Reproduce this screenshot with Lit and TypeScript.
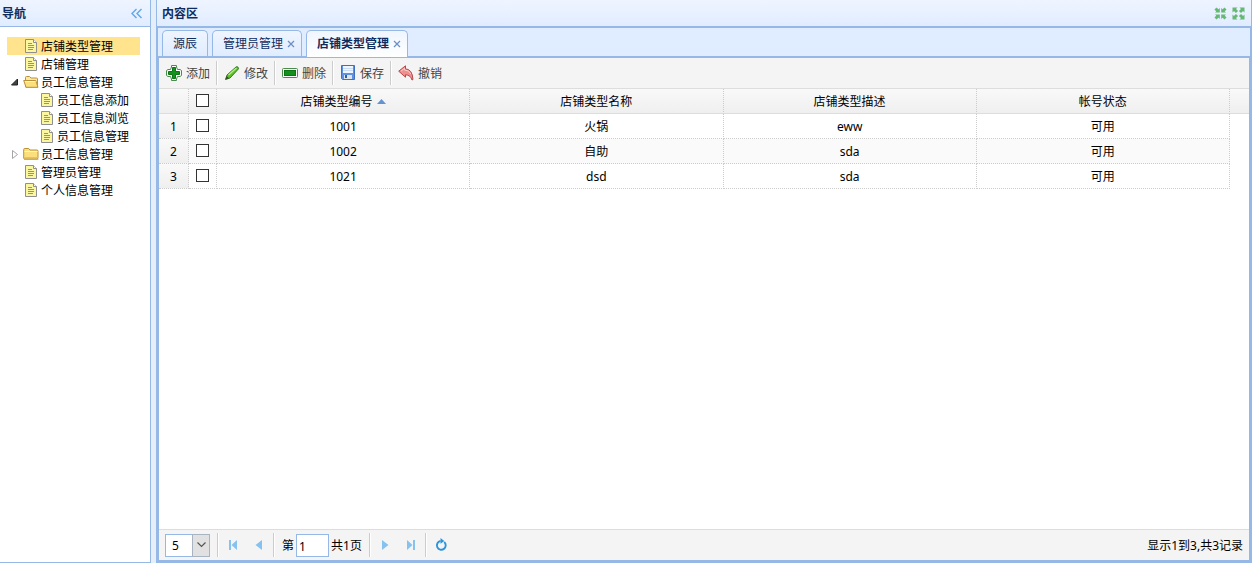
import { LitElement, html, css, svg, nothing } from "lit";
import { customElement, state } from "lit/decorators.js";
import { classMap } from "lit/directives/class-map.js";

interface TreeNode {
  text: string;
  children?: TreeNode[];
  open?: boolean;
}

interface ShopType {
  id: string;
  name: string;
  description: string;
  status: string;
}

const TREE: TreeNode[] = [
  { text: "店铺类型管理" },
  { text: "店铺管理" },
  {
    text: "员工信息管理",
    open: true,
    children: [{ text: "员工信息添加" }, { text: "员工信息浏览" }, { text: "员工信息管理" }],
  },
  { text: "员工信息管理", open: false, children: [] },
  { text: "管理员管理" },
  { text: "个人信息管理" },
];

const TABS = [
  { text: "源辰", closable: false },
  { text: "管理员管理", closable: true },
  { text: "店铺类型管理", closable: true },
];

const ROWS: ShopType[] = [
  { id: "1001", name: "火锅", description: "eww", status: "可用" },
  { id: "1002", name: "自助", description: "sda", status: "可用" },
  { id: "1021", name: "dsd", description: "sda", status: "可用" },
];

const icon = (body: unknown, w = 16, h = 16) =>
  html`<svg class="icon" width=${w} height=${h} viewBox="0 0 ${w} ${h}" aria-hidden="true">${body}</svg>`;

const fileIcon = icon(svg`
  <path d="M2.500 1.500h8l3 3v10h-11z" fill="#fbf7a0" stroke="#8f8f8f"/>
  <path d="M10.500 1.500v3h3" fill="#fff" stroke="#8f8f8f"/>
  <path d="M5 5.500h4M5 7.500h6M5 9.500h6M5 11.500h5" stroke="#9a9562"/>`);

const folderClosed = icon(svg`
  <path d="M1 13.500h14.500" stroke="#c9c9c9"/>
  <path d="M.7 12V3.500q0-1 1-1h4l1.300 1.500h7q1 0 1 1v7q0 1-1 1H1.700q-1 0-1-1z" fill="#fbdf7c" stroke="#bb9137"/>
  <path d="M1.500 5.500h13" stroke="#fff6c8"/>
  <path d="M1.500 11.500h13" stroke="#efc14c"/>`);

const folderOpen = icon(svg`
  <path d="M2.500 13V3.500q0-1 1-1h3L8 4h5.500q1 0 1 1v8z" fill="#fbe9a0" stroke="#bb9137"/>
  <path d="M.7 6.500h12l2.300 6.800H3z" fill="#fbdf7c" stroke="#bb9137" stroke-linejoin="round"/>
  <path d="M2 7.500h10.500" stroke="#fff6c8"/>`);

const addIcon = icon(svg`
  <path d="M5.500.5h5v1.500l1 2.500h2.500l1.500 1v5l-1.500 1h-2.500l-1 2.500v1.500h-5v-1.500l-1-2.500H2l-1.500-1v-5l1.500-1h2.500l1-2.500z" fill="#fff" stroke="#4d8a4d"/>
  <path d="M6.500 2.500h3v4h4v3h-4v4h-3v-4h-4v-3h4z" fill="#14911c" stroke="#0b7512"/>`);

const editIcon = icon(svg`
  <path d="M1.500 14.500l1.500-4.500 9-8q1-.8 2 .2t.2 2l-8.200 8.800z" fill="#5cbf2c" stroke="#2f7d1c" stroke-linejoin="round"/>
  <path d="M4.500 10l8-7" stroke="#b9ee82" stroke-width="1.300"/>
  <path d="M1.500 14.500l1.200-3.500 2.300 2.300z" fill="#3b4b28"/>`);

const removeIcon = icon(svg`
  <rect x=".5" y="3.500" width="15" height="9" rx="1" fill="#fff" stroke="#4d8a4d"/>
  <rect x="2.500" y="5.500" width="11" height="5" fill="#14911c" stroke="#0b7512"/>`);

const saveIcon = icon(svg`
  <path d="M1.500.5h13v14h-12l-1-1z" fill="#5f91e0" stroke="#3f70c0"/>
  <rect x="3" y="1" width="10" height="7" fill="#eef5ff"/>
  <path d="M3 3.500h10M3 5.500h10" stroke="#c9daf3"/>
  <rect x="4" y="10" width="8" height="4" fill="#dfe3ea"/>
  <rect x="5" y="10" width="2" height="3" fill="#2f5ba8"/>`);

const undoIcon = icon(svg`
  <path d="M.7 6.200L7.500.8v3q6.800.4 7.500 10.700l-1 .5q-1.500-5-6.500-5.200v2.400z" fill="#f08f8f" stroke="#b64a4a" stroke-linejoin="round"/>
  <path d="M3 6.200L6.500 3.300v1.700q4.500 0 6.500 4" fill="none" stroke="#fbd0cc"/>`);

const TOOLS = [
  { text: "添加", icon: addIcon },
  { text: "修改", icon: editIcon },
  { text: "删除", icon: removeIcon },
  { text: "保存", icon: saveIcon },
  { text: "撤销", icon: undoIcon },
];

const collapseAll = icon(
  svg`<path d="M1.500 1.500l2.500 2.500M11.500 1.500L9 4M1.500 11.500L4 9M11.500 11.500L9 9" stroke="#66b875" stroke-width="3"/>
  <path d="M1 5.500h4.800V1zM12 5.500H7.200V1zM1 7.500h4.800V12zM12 7.500H7.200V12z" fill="#66b875"/>`,
  13,
  13,
);

const expandAll = icon(
  svg`<path d="M2 2l3 3M11 2L8 5M2 11l3-3M11 11L8 8" stroke="#66b875" stroke-width="3"/>
  <path d="M.5 5.500v-5h5zM12.500 5.500v-5h-5zM.5 7.500v5h5zM12.500 7.500v5h-5z" fill="#66b875"/>`,
  13,
  13,
);

@customElement("nav-tree")
class NavTree extends LitElement {
  @state() private nodes: TreeNode[] = TREE;
  @state() private selected: TreeNode = TREE[0];

  static styles = css`
    :host {
      display: block;
      padding: 10px 10px 10px 7px;
    }
    ul {
      list-style: none;
      margin: 0;
      padding: 0;
    }
    .node {
      display: flex;
      align-items: center;
      height: 18px;
      color: #000;
      text-decoration: none;
      white-space: nowrap;
    }
    .node.selected {
      background: #ffe48d;
    }
    .hit {
      flex: none;
      display: flex;
      justify-content: center;
      width: 16px;
    }
    .icon {
      flex: none;
      display: block;
    }
    .label {
      padding: 2px 0 0 2px;
      line-height: 16px;
    }
  `;

  private pick(event: Event, node: TreeNode) {
    event.preventDefault();
    this.selected = node;
    if (node.children) {
      node.open = !node.open;
      this.nodes = [...this.nodes];
    }
  }

  private renderHit(node: TreeNode) {
    if (!node.children) return nothing;
    return node.open
      ? icon(svg`<path d="M10.500 5v6h-6z" fill="#444" stroke="#222"/>`)
      : icon(svg`<path d="M5.500 4.500l5 4-5 4z" fill="#fff" stroke="#a5a5a5"/>`);
  }

  private renderNodes(nodes: TreeNode[], depth: number): unknown {
    return html`<ul>
      ${nodes.map(
        (node) => html`<li>
          <a
            href="#"
            class=${classMap({ node: true, selected: node === this.selected })}
            @click=${(e: Event) => this.pick(e, node)}
          >
            ${Array.from({ length: depth }, () => html`<span class="hit"></span>`)}
            <span class="hit">${this.renderHit(node)}</span>
            ${node.children ? (node.open ? folderOpen : folderClosed) : fileIcon}
            <span class="label">${node.text}</span>
          </a>
          ${node.children && node.open ? this.renderNodes(node.children, depth + 1) : nothing}
        </li>`,
      )}
    </ul>`;
  }

  render() {
    return this.renderNodes(this.nodes, 0);
  }
}

@customElement("shop-grid")
class ShopGrid extends LitElement {
  static styles = css`
    :host {
      display: block;
      flex: 1;
      min-height: 0;
      overflow: auto;
      background: #fff;
    }
    table {
      width: 100%;
      table-layout: fixed;
      border-collapse: separate;
      border-spacing: 0;
      color: #000;
    }
    .col-number {
      width: 30px;
    }
    .col-check {
      width: 28px;
    }
    .col-gutter {
      width: 19px;
    }
    th,
    td {
      box-sizing: border-box;
      height: 25px;
      padding: 2px 0 0;
      text-align: center;
      font-weight: normal;
      line-height: 16px;
      border-right: 1px dotted #ccc;
      border-bottom: 1px dotted #ccc;
    }
    th {
      border-bottom: 1px solid #ddd;
      background: linear-gradient(#f9f9f9, #efefef);
    }
    th:last-child {
      border-right: 0;
    }
    .check {
      padding: 0 0 2px;
    }
    td.gutter {
      border: 0;
      background: #fff;
    }
    td.number {
      background: linear-gradient(#f9f9f9, #efefef);
    }
    tbody tr:nth-child(even) {
      background: #fafafa;
    }
    input {
      appearance: none;
      display: block;
      box-sizing: border-box;
      width: 13px;
      height: 13px;
      margin: 0 auto;
      border: 1px solid #333;
      background: #fff;
    }
    input:checked {
      background: #333;
      box-shadow: inset 0 0 0 2px #fff;
    }
    .sort {
      display: inline-flex;
      align-items: center;
      gap: 4px;
    }
    .sort svg {
      margin-bottom: 2px;
    }
  `;

  render() {
    return html`<table>
      <colgroup>
        <col class="col-number" />
        <col class="col-check" />
        <col span="4" />
        <col class="col-gutter" />
      </colgroup>
      <thead>
        <tr>
          <th></th>
          <th class="check"><input type="checkbox" aria-label="全选" /></th>
          <th aria-sort="ascending">
            <span class="sort"
              >店铺类型编号<svg width="9" height="5" viewBox="0 0 9 5" aria-hidden="true">
                <path d="M4.500 0L9 5H0z" fill="#6393d2" /></svg
            ></span>
          </th>
          <th>店铺类型名称</th>
          <th>店铺类型描述</th>
          <th>帐号状态</th>
          <th></th>
        </tr>
      </thead>
      <tbody>
        ${ROWS.map(
          (row, i) => html`<tr>
            <td class="number">${i + 1}</td>
            <td class="check"><input type="checkbox" aria-label=${row.id} /></td>
            <td>${row.id}</td>
            <td>${row.name}</td>
            <td>${row.description}</td>
            <td>${row.status}</td>
            <td class="gutter"></td>
          </tr>`,
        )}
      </tbody>
    </table>`;
  }
}

@customElement("grid-pager")
class GridPager extends LitElement {
  static styles = css`
    :host {
      flex: none;
      display: flex;
      align-items: center;
      height: 30px;
      padding: 0 6px;
      border-top: 1px solid #ddd;
      background: #f4f4f4;
      color: #000;
    }
    .size {
      display: grid;
      margin-right: 6px;
    }
    .size > * {
      grid-area: 1 / 1;
    }
    select,
    input {
      appearance: none;
      box-sizing: border-box;
      height: 23px;
      margin: 0;
      border: 1px solid #95b8e7;
      border-radius: 0;
      background: #fff;
      color: #000;
      font: inherit;
    }
    select {
      width: 45px;
      padding: 2px 6px 0;
    }
    .drop {
      justify-self: end;
      display: grid;
      place-items: center;
      box-sizing: border-box;
      width: 18px;
      height: 23px;
      border: 1px solid #a9b4c2;
      background: #e1e1e1;
      pointer-events: none;
    }
    input {
      width: 33px;
      padding: 2px 2px 0;
    }
    .sep {
      flex: none;
      width: 1px;
      height: 24px;
      margin: 0 1px;
      border-right: 1px solid #fff;
      background: #ccc;
    }
    button {
      display: grid;
      place-items: center;
      width: 26px;
      height: 26px;
      padding: 0;
      border: 0;
      background: none;
    }
    .icon {
      display: block;
    }
    .page {
      display: flex;
      align-items: center;
      gap: 2px;
      padding: 0 6px;
    }
    .page label,
    .page span,
    .info {
      padding-top: 2px;
    }
    .info {
      margin-left: auto;
    }
  `;

  render() {
    const blue = "#85c2f0";
    return html`
      <div class="size">
        <select aria-label="每页记录数">
          <option>5</option>
          <option>10</option>
          <option>20</option>
        </select>
        <span class="drop"
          ><svg width="9" height="6" viewBox="0 0 9 6">
            <path d="M.5.500l4 4 4-4" fill="none" stroke="#555" stroke-width="1.200" /></svg
        ></span>
      </div>
      <span class="sep"></span>
      <button aria-label="首页">
        ${icon(svg`<path d="M4 3h2v10H4zM12 3v10L6.500 8z" fill=${blue}/>`)}
      </button>
      <button aria-label="上一页">${icon(svg`<path d="M11 3v10L4.500 8z" fill=${blue}/>`)}</button>
      <span class="sep"></span>
      <div class="page">
        <label for="page">第</label>
        <input id="page" type="text" value="1" />
        <span>共1页</span>
      </div>
      <span class="sep"></span>
      <button aria-label="下一页">${icon(svg`<path d="M5 3v10l6.500-5z" fill=${blue}/>`)}</button>
      <button aria-label="末页">
        ${icon(svg`<path d="M4 3v10l5.500-5zM10 3h2v10h-2z" fill=${blue}/>`)}
      </button>
      <span class="sep"></span>
      <button aria-label="刷新">
        ${icon(svg`<path d="M11.200 5A4.400 4.400 0 1 1 7.500 4" fill="none" stroke="#2a94dc" stroke-width="1.900"/>
          <path d="M7.500 1l3.800 3-3.800 2.800z" fill="#2a94dc"/>`)}
      </button>
      <span class="info">显示1到3,共3记录</span>
    `;
  }
}

@customElement("app-root")
class AppRoot extends LitElement {
  @state() private active = 2;

  static styles = css`
    :host {
      display: grid;
      grid-template-columns: 151px 1fr;
      column-gap: 5px;
      height: 100vh;
      overflow: hidden;
      background: #e6eef8;
      font-family: "Noto Sans", "Noto Sans CJK SC", sans-serif;
      font-size: 12px;
      line-height: 16px;
    }
    .side,
    .main {
      box-sizing: border-box;
      display: flex;
      flex-direction: column;
      min-width: 0;
      min-height: 0;
      border: 1px solid #95b8e7;
      border-top: 0;
      background: #fff;
    }
    .side {
      border-left: 0;
    }
    .head {
      flex: none;
      display: flex;
      align-items: center;
      justify-content: space-between;
      height: 26px;
      padding: 0 6px 0 5px;
      border-bottom: 1px solid #95b8e7;
      background: linear-gradient(#eff5ff, #e0ecff);
      color: #0e2d5f;
    }
    .side .head {
      padding: 0 8px 0 2px;
    }
    h2 {
      margin: 0;
      padding-top: 2px;
      font-size: 12px;
      line-height: 16px;
      font-weight: bold;
    }
    button {
      padding: 0;
      border: 0;
      background: none;
      color: inherit;
      font: inherit;
      white-space: nowrap;
    }
    .icon {
      display: block;
    }
    .tools {
      display: flex;
      gap: 5px;
    }
    .tabs {
      flex: none;
      display: flex;
      gap: 4px;
      height: 26px;
      padding: 2px 4px 0;
      border: 1px solid #95b8e7;
      background: #e0ecff;
    }
    .tab {
      display: flex;
      align-items: center;
      gap: 4px;
      box-sizing: border-box;
      height: 26px;
      padding: 0 10px;
      border: 1px solid #95b8e7;
      border-bottom: 0;
      border-radius: 5px 5px 0 0;
      background: linear-gradient(#eff5ff, #e0ecff);
      color: #0e2d5f;
    }
    .tab.closable {
      padding-right: 6px;
    }
    .tab.active {
      height: 27px;
      background: linear-gradient(#eff5ff, #fff);
      font-weight: bold;
    }
    .close {
      display: block;
    }
    .panel {
      flex: 1;
      display: flex;
      flex-direction: column;
      min-height: 0;
      margin-top: -1px;
      padding-top: 1px;
      border: 1px solid #95b8e7;
      border-top: 0;
    }
    .frame {
      flex: 1;
      display: flex;
      flex-direction: column;
      min-height: 0;
      border: 1px solid #95b8e7;
    }
    .toolbar {
      flex: none;
      display: flex;
      align-items: center;
      height: 30px;
      padding: 0 7px;
      border-bottom: 1px solid #ddd;
      background: #f4f4f4;
      color: #444;
    }
    .tool {
      display: flex;
      align-items: center;
      gap: 4px;
    }
    .tool span {
      padding-top: 2px;
    }
    .tool + .tool::before {
      content: "";
      width: 1px;
      height: 24px;
      margin: 0 2px 0 6px;
      border-right: 1px solid #fff;
      background: #ccc;
    }
  `;

  render() {
    return html`
      <aside class="side">
        <div class="head">
          <h2>导航</h2>
          <button aria-label="折叠">
            ${icon(
              svg`<path d="M5.500 1L1 5.500 5.500 10M10.500 1L6 5.500l4.500 4.500" fill="none" stroke="#5fa8ea" stroke-width="1.400"/>`,
              11,
              11,
            )}
          </button>
        </div>
        <nav-tree></nav-tree>
      </aside>
      <main class="main">
        <div class="head">
          <h2>内容区</h2>
          <div class="tools">
            <button aria-label="全部折叠">${collapseAll}</button>
            <button aria-label="全部展开">${expandAll}</button>
          </div>
        </div>
        <div class="tabs">
          ${TABS.map(
            (tab, i) => html`<button
              class=${classMap({ tab: true, closable: tab.closable, active: i === this.active })}
              @click=${() => (this.active = i)}
            >
              <span>${tab.text}</span>
              ${tab.closable
                ? html`<svg class="close" width="8" height="8" viewBox="0 0 8 8" aria-hidden="true">
                    <path d="M1 1l6 6M7 1L1 7" stroke="#6a8fc4" stroke-width="1.200" />
                  </svg>`
                : nothing}
            </button>`,
          )}
        </div>
        <div class="panel">
          <div class="frame">
            <div class="toolbar">
              ${TOOLS.map(
                (tool) => html`<button class="tool">${tool.icon}<span>${tool.text}</span></button>`,
              )}
            </div>
            <shop-grid></shop-grid>
            <grid-pager></grid-pager>
          </div>
        </div>
      </main>
    `;
  }
}
